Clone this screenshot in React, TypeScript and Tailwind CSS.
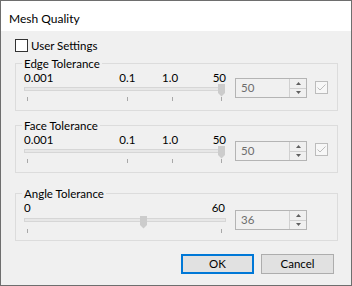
import React from 'react';

function Thumb({ className }: { className: string }) {
  return (
    <svg className={`absolute ${className}`} width="7" height="13" viewBox="0 0 7 13">
      <path d="M0 0H7V9L3.5 12.5L0 9Z" fill="#cccccc" />
    </svg>
  );
}

function Tick({ className = '' }: { className?: string }) {
  return <span className={`h-[4px] w-px bg-[#a8a8a8] ${className}`} />;
}

function SpinBox({ value, className }: { value: string; className: string }) {
  return (
    <div className={`flex h-[20px] w-[72px] border border-[#b4b4b4] bg-[#f0f0f0] ${className}`}>
      <div className="flex flex-1 items-center pl-[5px] leading-none text-[#6d6d6d]">{value}</div>
      <div className="flex w-[17px] flex-col border-l border-[#d0d0d0]">
        <div className="flex flex-1 items-center justify-center border-b border-[#d0d0d0]">
          <svg width="5" height="3" viewBox="0 0 5 3">
            <path d="M2.5 0L5 3H0Z" fill="#606060" />
          </svg>
        </div>
        <div className="flex flex-1 items-center justify-center">
          <svg width="5" height="3" viewBox="0 0 5 3">
            <path d="M0 0H5L2.5 3Z" fill="#606060" />
          </svg>
        </div>
      </div>
    </div>
  );
}

function DisabledCheck() {
  return (
    <span className="ml-[8px] mt-[17px] flex h-[13px] w-[13px] items-center justify-center border border-[#bcbcbc] bg-[#f7f7f7]">
      <svg width="9" height="7" viewBox="0 0 9 7">
        <path d="M0.5 3.5L3 6L8.5 0.5" fill="none" stroke="#bcbcbc" strokeWidth="1" />
      </svg>
    </span>
  );
}

function Group({ title, className, children }: { title: string; className: string; children: React.ReactNode }) {
  return (
    <div className={`relative h-[48px] border border-[#dcdcdc] ${className}`}>
      <span className="absolute -top-[8px] left-[6px] bg-[#f0f0f0] px-[2px] leading-[16px]">{title}</span>
      <div className="flex pl-[8px]">{children}</div>
    </div>
  );
}

function ToleranceSlider() {
  return (
    <div className="flex w-[202px] flex-col pt-[8px]">
      <div className="flex h-[12px] leading-[12px]">
        <span className="w-[96px]">0.001</span>
        <span className="w-[43px]">0.1</span>
        <span className="w-[51px]">1.0</span>
        <span>50</span>
      </div>
      <div className="relative mt-[3px] h-[4px] w-[200px] border border-[#d6d6d6] bg-[#e7e7e7]">
        <Thumb className="-top-[4px] left-[193px]" />
      </div>
      <div className="mt-[6px] flex pl-[3px]">
        <Tick />
        <Tick className="ml-[99px]" />
        <Tick className="ml-[44px]" />
        <Tick className="ml-[48px]" />
      </div>
    </div>
  );
}

function AngleSlider() {
  return (
    <div className="flex w-[202px] flex-col pt-[8px]">
      <div className="flex h-[12px] justify-between pr-[1px] leading-[12px]">
        <span>0</span>
        <span>60</span>
      </div>
      <div className="relative mt-[4px] h-[4px] w-[202px] border border-[#d6d6d6] bg-[#e7e7e7]">
        <Thumb className="-top-[3px] left-[115px]" />
      </div>
      <div className="mt-[7px] flex justify-between px-[3px]">
        <Tick />
        <Tick className="mr-[1px]" />
      </div>
    </div>
  );
}

export default function App() {
  return (
    <div className="flex h-[286px] w-[352px] flex-col border border-[#6e6e6e] bg-[#f0f0f0] font-['Lato','Liberation_Sans',sans-serif] text-[11.5px] text-black">
      <div className="h-[30px] shrink-0 bg-white pl-[8px] pt-[10px] text-[12px] leading-[16px]">Mesh Quality</div>
      <div className="flex flex-col pl-[14px] pr-[13px]">
        <label className="mt-[8px] flex h-[13px] items-start gap-[3px] leading-[13px]">
          <span className="h-[13px] w-[13px] border border-[#333333] bg-white" />
          User Settings
        </label>

        <Group title="Edge Tolerance" className="mt-[11px]">
          <ToleranceSlider />
          <SpinBox value="50" className="ml-[9px] mt-[14px]" />
          <DisabledCheck />
        </Group>

        <Group title="Face Tolerance" className="mt-[14px]">
          <ToleranceSlider />
          <SpinBox value="50" className="ml-[9px] mt-[15px]" />
          <DisabledCheck />
        </Group>

        <Group title="Angle Tolerance" className="mt-[20px]">
          <AngleSlider />
          <SpinBox value="36" className="ml-[9px] mt-[16px]" />
        </Group>

        <div className="mt-[13px] flex justify-end gap-[7px] pr-[4px]">
          <button className="h-[20px] w-[73px] border-2 border-[#0078d7] bg-[#e1e1e1] leading-none">OK</button>
          <button className="h-[20px] w-[73px] border border-[#adadad] bg-[#e1e1e1] leading-none">Cancel</button>
        </div>
      </div>
    </div>
  );
}
